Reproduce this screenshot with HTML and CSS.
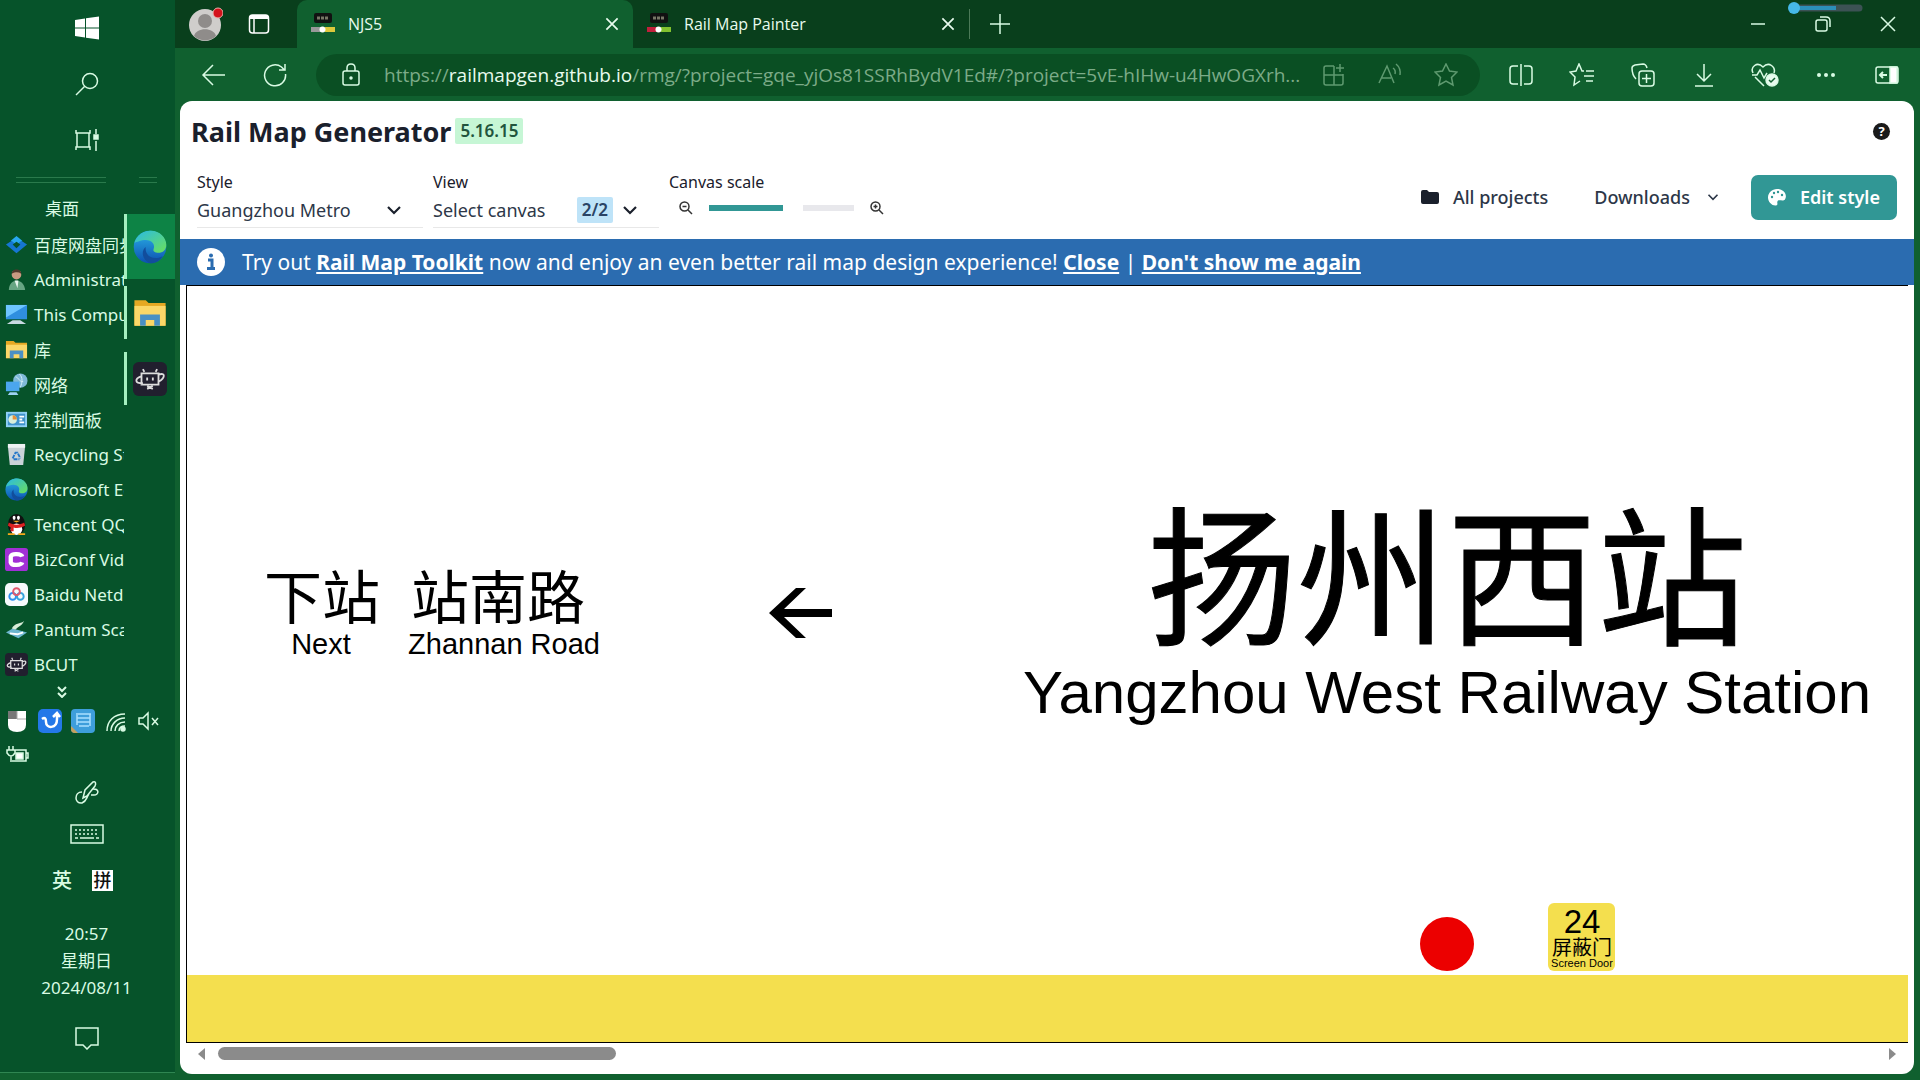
FILE: index.html
```html
<!DOCTYPE html>
<html lang="en">
<head>
<meta charset="UTF-8">
<meta name="viewport" content="width=device-width, initial-scale=1.0">
<title>NJS5 - Rail Map Generator</title>
<link rel="stylesheet" href="styles.css">
</head>
<body>

<!-- shared icons -->
<svg class="defs" width="0" height="0">
    <defs>
        <linearGradient id="edgeBlue" x1="0" y1="0" x2="0" y2="1">
            <stop offset="0" stop-color="#2bb3e8"/>
            <stop offset="1" stop-color="#0c50b0"/>
        </linearGradient>
        <linearGradient id="edgeGreen" x1="0" y1="0" x2="1" y2="1">
            <stop offset="0" stop-color="#29b9e6"/>
            <stop offset="1" stop-color="#6be05a"/>
        </linearGradient>
    </defs>
    <symbol id="edge" viewBox="0 0 24 24">
        <circle cx="12" cy="12" r="11.500" fill="url(#edgeBlue)"/>
        <path d="M1 9C3 3 8 .5 12.500.5 19 .5 23.500 5.500 23.500 10.500c0 3.500-2.500 5.500-5.500 5.500-2.500 0-4-1-3.500-2.500C16 10 13 7 9 7 5.500 7 2.500 8.500 1 9z" fill="url(#edgeGreen)"/>
        <path d="M9 12c-1 6 5 10 12 6.500-2 3-5 5-8.500 5C7 22 5 15 9 12z" fill="#124d9c"/>
    </symbol>
    <symbol id="folder" viewBox="0 0 24 24">
        <path d="M1 3h8l2 2h12v16H1z" fill="#e5a823"/>
        <path d="M1 7h22v14H1z" fill="#fbd768"/>
        <path d="M5 21v-8h14v8h-4v-4H9v4z" fill="#4a90c4"/>
    </symbol>
    <symbol id="bcut" viewBox="0 0 24 24">
        <rect width="24" height="24" rx="4" fill="#211f2e"/>
        <path d="M8 7l-1-2M16 7l1-2M6 8h12v8H6zM10 11v2M14 11v2M6 10c-5 2-5 5 1 5M18 9c5-2 5 2 0 5M10 19l4-2M10 17l4 2" fill="none" stroke="#ddd" stroke-width="1.300"/>
    </symbol>
    <symbol id="close" viewBox="0 0 16 16">
        <path d="M3 3l10 10M13 3L3 13" fill="none" stroke="currentColor" stroke-width="1.500"/>
    </symbol>
    <symbol id="chevron" viewBox="0 0 16 16">
        <path d="M2 5l6 6 6-6" fill="none" stroke="currentColor" stroke-width="2.200"/>
    </symbol>
</svg>

<div class="desktop">
    <aside class="taskbar">
        <button class="task-btn" aria-label="Start">
            <svg width="24" height="24" viewBox="0 0 24 24" fill="#fff"><path d="M0 4l10-1.500v9H0zM11 2.300L24 .5v11H11zM0 12.500h10v9L0 20zM11 12.500h13v11l-13-1.800z"/></svg>
        </button>
        <button class="task-btn" aria-label="Search">
            <svg class="line" width="24" height="24" viewBox="0 0 24 24"><circle cx="15" cy="9" r="7.500"/><path d="M9.500 14.500L1 23"/></svg>
        </button>
        <button class="task-btn" aria-label="Task view">
            <svg class="line" width="24" height="24" viewBox="0 0 24 24"><path d="M1 2v3h14V2M1 22v-3h14v3M2 5v14M14 5v14M21 1v5M21 13v10"/><path d="M19 7h4v4h-4z" fill="#d9fbe4"/></svg>
        </button>
        <div class="grips"><span class="grip long"></span><span class="grip"></span></div>
        <div class="middle">
            <nav class="shortcuts">
                <h2>桌面</h2>
                <a href="#"><svg viewBox="0 0 24 24"><path d="M12 3l6 5-6 5-6-5z" fill="#28a8f0"/><path d="M1 12l6-4 5 5 5-5 6 4-11 9z" fill="#1676d2"/><path d="M8 12l4-3 4 3-4 4z" fill="#06532a"/></svg>百度网盘同步</a>
                <a href="#"><svg viewBox="0 0 24 24"><circle cx="12" cy="7" r="5" fill="#c99a82"/><path d="M7 6c0-6 10-6 10 0-3-2-6-2-10 0z" fill="#50382c"/><path d="M4 23c0-13 16-13 17 0z" fill="#67a583"/><path d="M10 13l3 8 1-8z" fill="#e8f5ee"/></svg>Administrator</a>
                <a href="#"><svg viewBox="0 0 24 24"><path d="M1 2h22v15H1z" fill="#2f8fe0"/><path d="M1 2h22L1 15z" fill="#6ec5ff"/><path d="M8 18h8l6 4H2z" fill="#c9d9e2"/></svg>This Computer</a>
                <a href="#"><svg><use href="#folder"/></svg>库</a>
                <a href="#"><svg viewBox="0 0 24 24"><circle cx="16" cy="8" r="7.500" fill="#7fb9d8"/><path d="M11 4c4 1 3 5 8 5M15 1c4 4 3 9 1 14" stroke="#d4edf8" fill="none"/><path d="M1 9h14v10H1z" fill="#4ba6ee"/><path d="M5 20h7l2 3H3z" fill="#9fd2f5"/></svg>网络</a>
                <a href="#"><svg viewBox="0 0 24 24"><path d="M1 4h22v16H1z" fill="#8fd0f5"/><path d="M3 6h18v12H3z" fill="#3f93cc"/><circle cx="8" cy="12" r="4.500" fill="#d9efda"/><path d="M8 12V7.500a4.500 4.500 0 0 1 4.500 4.500z" fill="#e58f3a"/><path d="M15 9h5M15 12h3M15 15h5" stroke="#fff" stroke-width="2"/></svg>控制面板</a>
                <a href="#"><svg viewBox="0 0 24 24"><path d="M3 3h18l-2 20H5z" fill="#cbd3d8"/><path d="M3 1h18v4H3z" fill="#eef2f4"/><path d="M8 16l3-6h2l3 6M9 17h6" stroke="#2677c9" stroke-width="2" stroke-dasharray="4 1" fill="none"/></svg>Recycling Station</a>
                <a href="#"><svg><use href="#edge"/></svg>Microsoft Edge</a>
                <a href="#"><svg viewBox="0 0 24 24"><ellipse cx="12" cy="12" rx="9" ry="11" fill="#111"/><ellipse cx="12" cy="17" rx="6" ry="6" fill="#fff"/><ellipse cx="9.500" cy="5" rx="1.500" ry="2.200" fill="#fff"/><ellipse cx="14" cy="5" rx="1.500" ry="2.200" fill="#fff"/><path d="M8 8h8l-4 2z" fill="#f7a81b"/><path d="M4 10c5 3 11 3 16 0l1 3c-5 3-9 3-12 2v4H6v-4l-3-2z" fill="#dc2222"/><path d="M3 22h7M14 22h7" stroke="#f7a81b" stroke-width="2"/></svg>Tencent QQ</a>
                <a href="#"><svg viewBox="0 0 24 24"><rect width="24" height="24" rx="3" fill="#a12fd6"/><path d="M18 9c-1-3-11-4-12 0v6c1 4 11 3 12 0" fill="none" stroke="#fff" stroke-width="4.500"/></svg>BizConf Video</a>
                <a href="#"><svg viewBox="0 0 24 24"><rect width="24" height="24" rx="5" fill="#f6fafc"/><g fill="none" stroke-width="2"><circle cx="8" cy="14" r="3.500" stroke="#2f8ff0"/><circle cx="16" cy="14" r="3.500" stroke="#35a3dc"/><circle cx="12" cy="9" r="3.500" stroke="#e2586c"/></g></svg>Baidu Netdisk</a>
                <a href="#"><svg viewBox="0 0 24 24"><path d="M1 15l7-4 15 4-9 6z" fill="#6db6cf"/><path d="M5 16l8 1 6-2" fill="none" stroke="#fff" stroke-width="2"/><path d="M7 11c4-7 8-4 13-8-3 6-6 5-9 9z" fill="#d8ecd8"/></svg>Pantum Scanner</a>
                <a href="#"><svg><use href="#bcut"/></svg>BCUT</a>
                <button class="more" aria-label="More shortcuts"><svg width="10" height="12" viewBox="0 0 10 12"><path d="M1 1l4 4 4-4M1 7l4 4 4-4" fill="none" stroke="#d9fbe4" stroke-width="2"/></svg></button>
            </nav>
            <div class="running">
                <button class="app active" aria-label="Microsoft Edge"><svg width="34" height="34"><use href="#edge"/></svg></button>
                <button class="app" aria-label="File Explorer"><svg width="34" height="34"><use href="#folder"/></svg></button>
                <button class="app" aria-label="BCUT"><svg width="34" height="34"><use href="#bcut"/></svg></button>
            </div>
        </div>
        <div class="tray">
            <svg width="24" height="24" viewBox="0 0 24 24"><path d="M3 2h18v14q0 7-9 7t-9-7z" fill="#fff"/><path d="M3 2h9v8H3z" fill="#777"/><path d="M12 2v8h9" fill="none" stroke="#aaa"/></svg>
            <svg width="24" height="24" viewBox="0 0 24 24"><rect width="24" height="24" rx="5" fill="#2478e8"/><path d="M4 10q4-3 4 3c0 7 11 7 11-3V5M15 8l4-4 3 4" fill="none" stroke="#fff" stroke-width="2.500"/></svg>
            <svg width="24" height="24" viewBox="0 0 24 24"><rect width="24" height="24" rx="4" fill="#3e9edb"/><path d="M0 17l7 7H4q-4 0-4-4z" fill="#c5a15c"/><path d="M7 5h13M6 9h13M6 13h13M8 17h10M6 4v12M19 5v12" stroke="#a9e0ff" stroke-width="1.500" fill="none"/></svg>
            <svg class="line" width="24" height="24" viewBox="0 0 24 24"><path d="M3 22C3 12 10 5 21 5M7 22C7 15 13 9 21 9M11 22c0-5 4-9 10-9M15 22c0-3 2-5 6-5"/><circle cx="19" cy="20" r="2" fill="#d9fbe4"/></svg>
            <svg class="line" width="24" height="24" viewBox="0 0 24 24"><path d="M2 9h4l5-5v16l-5-5H2zM15 9l6 7M21 9l-6 7"/></svg>
            <svg class="line" width="24" height="24" viewBox="0 0 24 24"><path d="M8 7h13v11H7M21 10h2v5h-2M4 3v4M8 3v4M2 7h8v3q-2 3-4 3t-4-3zM6 13v6"/><path d="M11 10h7v6h-7z" fill="#fff"/></svg>
        </div>
        <button class="task-small" aria-label="Pen"><svg class="line" width="26" height="26" viewBox="0 0 26 26"><path d="M8 12c-8 0-8 12 0 11 5-2 4-5 7-9M9 18l2-8 8-8c3-1 3 2 2 4l-8 10zM18 9c8-1 7 6 2 6h-3"/></svg></button>
        <button class="task-small" aria-label="Keyboard"><svg class="line" width="34" height="20" viewBox="0 0 34 20"><rect x="1" y="1" width="32" height="18"/><path d="M5 6h24M5 10h24" stroke-dasharray="2 2"/><path d="M5 14h3M10 14h14M26 14h3"/></svg></button>
        <div class="ime"><span>英</span><span class="pin">拼</span></div>
        <div class="clock">20:57<br>星期日<br>2024/08/11</div>
        <button class="task-small" aria-label="Notifications"><svg class="line" width="24" height="24" viewBox="0 0 24 24"><path d="M1 2h22v17h-7l-4 4-4-4H1z"/></svg></button>
    </aside>

    <section class="browser">
        <header class="tabs">
            <div class="profile">
                <button class="avatar" aria-label="Profile">
                    <svg width="34" height="34" viewBox="0 0 34 34"><circle cx="16" cy="18" r="16" fill="#cfcdcb"/><circle cx="16" cy="14" r="7" fill="#8f8c8a"/><path d="M5 29c2-9 20-9 22 0a16 16 0 0 1-22 0z" fill="#8f8c8a"/><circle cx="29" cy="6" r="5" fill="#d3121b" stroke="#e9b0aa"/></svg>
                </button>
                <button aria-label="Tab actions"><svg width="22" height="22" viewBox="0 0 22 22" fill="none" stroke="#fff" stroke-width="1.500"><rect x="1.500" y="2" width="19" height="18" rx="3"/><path d="M2 4h18" stroke-width="4"/><path d="M6 6v14"/></svg></button>
            </div>
            <div class="tab current">
                <svg width="24" height="22" viewBox="0 0 24 22"><rect x="3" width="18" height="10" rx="2" fill="#111"/><path d="M6 5h12" stroke="#776" stroke-width="3" stroke-dasharray="3 1"/><path d="M0 14h10v5H0z" fill="#999"/><path d="M14 14h10v5H14z" fill="#dcc83c"/><circle cx="11.500" cy="16.500" r="3" fill="#fff"/></svg>
                <span>NJS5</span>
                <button aria-label="Close tab"><svg width="18" height="18"><use href="#close"/></svg></button>
            </div>
            <div class="tab">
                <svg width="24" height="22" viewBox="0 0 24 22"><rect x="3" width="18" height="10" rx="2" fill="#111"/><path d="M6 5h12" stroke="#776" stroke-width="3" stroke-dasharray="3 1"/><path d="M0 14h10v5H0z" fill="#c0203c"/><path d="M14 14h10v5H14z" fill="#82c12f"/><circle cx="11.500" cy="16.500" r="3" fill="#fff"/></svg>
                <span>Rail Map Painter</span>
                <button aria-label="Close tab"><svg width="18" height="18"><use href="#close"/></svg></button>
            </div>
            <button class="new-tab" aria-label="New tab"><svg class="line" width="20" height="20" viewBox="0 0 20 20"><path d="M10 0v20M0 10h20"/></svg></button>
            <div class="window-buttons">
                <button aria-label="Minimize"><svg class="line" width="16" height="16" viewBox="0 0 16 16"><path d="M1 8h14"/></svg></button>
                <button aria-label="Restore"><svg class="line" width="16" height="16" viewBox="0 0 16 16"><rect x="1" y="4" width="11" height="11" rx="2"/><path d="M5 1h6q4 0 4 4v6"/></svg></button>
                <button aria-label="Close"><svg class="line" width="16" height="16" viewBox="0 0 16 16"><path d="M1 1l14 14M15 1L1 15"/></svg></button>
                <svg class="volume" width="76" height="14" viewBox="0 0 76 14"><path d="M8 8h64" stroke="#3c5254" stroke-width="7" stroke-linecap="round"/><path d="M8 8h41" stroke="#2b8fb8" stroke-width="4"/><circle cx="7" cy="8" r="6" fill="#46b8e8"/></svg>
            </div>
        </header>

        <div class="toolbar">
            <button class="nav" aria-label="Back"><svg class="line" width="24" height="24" viewBox="0 0 24 24"><path d="M24 12H2M12 2L2 12l10 10"/></svg></button>
            <button class="nav" aria-label="Refresh"><svg class="line" width="24" height="24" viewBox="0 0 24 24"><path d="M22.500 11a10.500 10.500 0 1 1-4-7l3 3M22 1v6h-6"/></svg></button>
            <div class="address">
                <svg class="line" width="20" height="24" viewBox="0 0 20 24"><rect x="2" y="8" width="16" height="14" rx="2"/><path d="M6 8V5q0-4 4-4t4 4v3"/><circle cx="10" cy="15" r="1" fill="#d9fbe4"/></svg>
                <a class="url" href="#">https://<b>railmapgen.github.io</b>/rmg/?project=gqe_yjOs81SSRhBydV1Ed#/?project=5vE-hIHw-u4HwOGXrh...</a>
                <button aria-label="Install app"><svg width="24" height="24" viewBox="0 0 24 24"><path d="M12 3H4q-2 0-2 2v15q0 2 2 2h15q2 0 2-2v-9M2 12h19M12 3v19M18 1v8M14 5h8"/></svg></button>
                <button aria-label="Read aloud"><svg width="24" height="24" viewBox="0 0 24 24"><path d="M1 20L9 3l7 17M4 15h9M15 5q3 2 2 6M18 1q5 4 4 11"/></svg></button>
                <button aria-label="Favorite"><svg width="24" height="24" viewBox="0 0 24 24"><path d="M12 1l3.500 7 7.500 1-5.500 5.500L19 22l-7-4-7 4 1.500-7.500L1 9l7.500-1z"/></svg></button>
            </div>
            <div class="extras">
                <button aria-label="Split screen"><svg class="line" width="24" height="24" viewBox="0 0 24 24"><path d="M9 3H4Q1 3 1 6v12q0 3 3 3h5M15 3h5q3 0 3 3v12q0 3-3 3h-5M12 1v22"/></svg></button>
                <button aria-label="Favorites"><svg class="line" width="26" height="24" viewBox="0 0 26 24"><path d="M15 8l-2 0L10 1 7 8l-6 1 5 5-1 8 6-4M17 8h8M15 13h10M17 18h7"/></svg></button>
                <button aria-label="Collections"><svg class="line" width="24" height="24" viewBox="0 0 24 24"><rect x="8" y="8" width="15" height="15" rx="3"/><path d="M15.500 11v9M11 15.500h9M5 16C1 12 1 7 1 5q0-2 3-3l8-1q3 0 4 4"/></svg></button>
                <button aria-label="Downloads"><svg class="line" width="20" height="24" viewBox="0 0 20 24"><path d="M10 1v17M3 11l7 7 7-7M1 23h18"/></svg></button>
                <button aria-label="Browser essentials"><svg class="line" width="28" height="24" viewBox="0 0 28 24"><path d="M2 10C-1 4 6-2 12 4c6-6 13 0 11 6M1 12h5l3-5 4 8 3-5M4 14l9 9"/><circle cx="21" cy="17" r="6" fill="#e8fbee"/><path d="M18 17l2 2 4-4" stroke="#10602f"/></svg></button>
                <button aria-label="More"><svg width="20" height="6" viewBox="0 0 20 6" fill="#d9fbe4"><circle cx="3" cy="3" r="2"/><circle cx="10" cy="3" r="2"/><circle cx="17" cy="3" r="2"/></svg></button>
                <button aria-label="Sidebar"><svg class="line" width="24" height="20" viewBox="0 0 24 20"><rect x="1" y="2" width="22" height="16" rx="2"/><path d="M15 2h7v16h-7z" fill="#fff"/><path d="M12 10H5M8 7l-3 3 3 3" stroke-width="2"/></svg></button>
            </div>
        </div>

        <main class="page">
            <div class="title-row">
                <h1>Rail Map Generator</h1>
                <span class="badge version">5.16.15</span>
                <button class="help" aria-label="Help">?</button>
            </div>

            <div class="controls">
                <div class="field">
                    <label for="style">Style</label>
                    <div class="select-box">
                        <select id="style"><option>Guangzhou Metro</option></select>
                        <svg width="16" height="16"><use href="#chevron"/></svg>
                    </div>
                </div>
                <div class="field">
                    <label for="view">View</label>
                    <div class="select-box">
                        <select id="view"><option>Select canvas</option></select>
                        <span class="badge count">2/2</span>
                        <svg width="16" height="16"><use href="#chevron"/></svg>
                    </div>
                </div>
                <div class="field scale">
                    <label for="scale">Canvas scale</label>
                    <div class="slider-box">
                        <svg width="14" height="14" viewBox="0 0 14 14" fill="none" stroke="#333" stroke-width="1.500"><circle cx="5.500" cy="5.500" r="4.500"/><path d="M9 9l4 4M3.500 5.500h4"/></svg>
                        <input type="range" id="scale" min="0" max="100" value="59">
                        <svg width="14" height="14" viewBox="0 0 14 14" fill="none" stroke="#333" stroke-width="1.500"><circle cx="5.500" cy="5.500" r="4.500"/><path d="M9 9l4 4M3.500 5.500h4M5.500 3.500v4"/></svg>
                    </div>
                </div>
                <div class="actions">
                    <button class="ghost"><svg width="18" height="16" viewBox="0 0 18 16" fill="#1a202c"><path d="M0 3q0-2 2-2h4l2 2h8q2 0 2 2v8q0 2-2 2H2q-2 0-2-2z"/></svg>All projects</button>
                    <button class="ghost downloads">Downloads<svg width="12" height="12"><use href="#chevron"/></svg></button>
                    <button class="primary"><svg width="18" height="18" viewBox="0 0 18 18"><path d="M9 1C4 1 0 5 0 9.500 0 14 4 18 8 17.500c3-1 0-3 2-5 2-1 5 1 7-1C20 6 15 1 9 1z" fill="#fff"/><g fill="#319795"><circle cx="4" cy="9" r="1.200"/><circle cx="6" cy="5" r="1.200"/><circle cx="10" cy="4" r="1.200"/><circle cx="14" cy="7" r="1.200"/></g></svg>Edit style</button>
                </div>
            </div>

            <div class="banner">
                <svg width="28" height="28" viewBox="0 0 28 28"><circle cx="14" cy="14" r="14" fill="#fff"/><path d="M11 12h4v8M10 20.500h8" fill="none" stroke="#2b6cb0" stroke-width="3"/><circle cx="14" cy="7.500" r="2" fill="#2b6cb0"/></svg>
                <p>Try out <a href="#">Rail Map Toolkit</a> now and enjoy an even better rail map design experience! <a href="#">Close</a> | <a href="#">Don't show me again</a></p>
            </div>

            <div class="canvas">
                <svg width="1721" height="756">
                    <g text-anchor="middle">
                        <text class="zh" x="135" y="333" font-size="58">下站</text>
                        <text class="en" x="134" y="368" font-size="29">Next</text>
                        <text class="zh" x="311" y="333" font-size="58">站南路</text>
                        <text class="en" x="317" y="368" font-size="29">Zhannan Road</text>
                        <text class="zh name" x="1260" y="348" font-size="150">扬州西站</text>
                        <text class="en" x="1260" y="427" font-size="60">Yangzhou West Railway Station</text>
                    </g>
                    <path d="M582 327L609 302h10l-22 21h48v8h-48l22 21h-10z"/>
                    <rect y="689" width="100%" height="67" fill="#f4df4e"/>
                    <circle cx="1260" cy="658" r="27" fill="#ec0000"/>
                    <rect x="1361" y="617" width="67" height="68" rx="6" fill="#f4df4e"/>
                    <g text-anchor="middle">
                        <text class="en" x="1395" y="647" font-size="33">24</text>
                        <text class="zh" x="1395" y="669" font-size="20">屏蔽门</text>
                        <text class="en" x="1395" y="681" font-size="11">Screen Door</text>
                    </g>
                </svg>
            </div>
            <div class="scrollbar">
                <span class="arrow left"></span>
                <div class="track"><div class="thumb"></div></div>
                <span class="arrow right"></span>
            </div>
        </main>
    </section>
</div>

</body>
</html>
```
FILE: styles.css
```css
* {
    box-sizing: border-box;
}
body {
    margin: 0;
    font-family: "Noto Sans", "Noto Sans CJK SC", sans-serif;
    color: #1a202c;
}
button {
    padding: 0;
    border: 0;
    background: none;
    color: inherit;
    font: inherit;
    cursor: pointer;
}
svg {
    display: block;
    flex: none;
}
.defs {
    position: absolute;
}
.line {
    fill: none;
    stroke: #d9fbe4;
    stroke-width: 1.5;
}
.desktop {
    display: flex;
    height: 100vh;
    overflow: hidden;
    background: #10602f;
}

/* taskbar */
.taskbar {
    display: flex;
    flex-direction: column;
    width: 175px;
    flex: none;
    margin-bottom: 7px;
    padding-right: 2px;
    border-bottom: 1px solid #2f8652;
    background: #06532a;
    color: #d9fbe4;
}
.task-btn {
    display: flex;
    justify-content: center;
    align-items: center;
    height: 56px;
}
.grips {
    display: flex;
    gap: 33px;
    height: 22px;
    padding: 9px 16px 0;
}
.grip {
    width: 18px;
    height: 6px;
    border: solid #2a7a4c;
    border-width: 1px 0;
}
.grip.long {
    width: 91px;
}
.middle {
    display: flex;
    height: 514px;
}
.shortcuts {
    width: 124px;
    overflow: hidden;
}
.shortcuts h2 {
    margin: 0;
    height: 37px;
    line-height: 37px;
    font-size: 17px;
    font-weight: 400;
    text-align: center;
}
.shortcuts a {
    display: flex;
    align-items: center;
    gap: 6px;
    height: 35px;
    padding-left: 5px;
    color: #d9fbe4;
    font-size: 17px;
    white-space: nowrap;
    text-decoration: none;
}
.shortcuts a svg {
    width: 23px;
    height: 23px;
}
.more {
    display: block;
    margin: 4px auto 0;
}
.running {
    flex: 1;
    display: flex;
    flex-direction: column;
    gap: 13px;
    padding-top: 30px;
}
.app {
    display: flex;
    justify-content: center;
    align-items: center;
    height: 53px;
    border-left: 3px solid #a5efc0;
}
.app.active {
    height: 65px;
    margin: -6px -2px -6px 0;
    padding-right: 2px;
    background: #0d8345;
}
.tray {
    display: grid;
    grid-template-columns: repeat(5, 33px);
    justify-items: center;
    align-items: center;
    grid-auto-rows: 34px;
}
.task-small {
    display: flex;
    justify-content: center;
    align-items: center;
    height: 40px;
    margin-top: 1px;
}
.ime {
    display: flex;
    justify-content: center;
    gap: 20px;
    height: 58px;
    padding: 16px 8px 0 0;
    font-size: 20px;
    line-height: 22px;
    font-weight: 500;
}
.ime .pin {
    width: 21px;
    height: 21px;
    font-size: 18px;
    line-height: 20px;
    text-align: center;
    background: #fff;
    color: #111;
}
.clock {
    padding: 8px 0;
    margin-bottom: 8px;
    font-size: 17px;
    line-height: 27px;
    text-align: center;
}

/* browser frame */
.browser {
    flex: 1;
    min-width: 0;
    display: flex;
    flex-direction: column;
}
.tabs {
    display: flex;
    height: 48px;
    background: #093f1c;
    color: #e8fbee;
    font-family: "Open Sans", sans-serif;
    font-size: 16px;
}
.profile {
    display: flex;
    align-items: center;
    gap: 25px;
    width: 122px;
    padding-left: 14px;
}
.tab {
    display: flex;
    align-items: center;
    gap: 13px;
    width: 336px;
    padding: 0 12px 0 14px;
}
.tab.current {
    border-radius: 10px 10px 0 0;
    background: #10602f;
}
.tab span {
    flex: 1;
}
.new-tab {
    display: flex;
    align-items: center;
    height: 30px;
    margin: 9px 0;
    padding-left: 20px;
    border-left: 1px solid #4c7a58;
}
.window-buttons {
    display: flex;
    align-items: center;
    margin-left: auto;
    position: relative;
}
.window-buttons button {
    display: flex;
    justify-content: center;
    width: 65px;
}
.volume {
    position: absolute;
    top: 0;
    left: 62px;
}
.toolbar {
    display: flex;
    align-items: center;
    height: 53px;
}
.nav {
    display: flex;
    justify-content: center;
    width: 62px;
    margin-left: 7px;
}
.nav + .nav {
    margin-left: 0;
}
.address {
    flex: 1;
    min-width: 0;
    display: flex;
    align-items: center;
    gap: 32px;
    height: 42px;
    margin: 0 10px;
    padding: 0 22px 0 25px;
    border-radius: 21px;
    background: #0a4f23;
}
.address button svg {
    fill: none;
    stroke: #5f9a70;
    stroke-width: 1.5;
}
.url {
    flex: 1;
    min-width: 0;
    margin: 0 -20px 0 -9px;
    overflow: hidden;
    color: #7cab88;
    font-family: "Open Sans", sans-serif;
    font-size: 19px;
    text-decoration: none;
    white-space: nowrap;
}
.url b {
    color: #e8fbee;
    font-weight: 400;
}
.extras {
    display: flex;
    padding-right: 3px;
}
.extras button {
    display: flex;
    justify-content: center;
    align-items: center;
    width: 61px;
}

/* app */
.page {
    flex: 1;
    min-height: 0;
    display: flex;
    flex-direction: column;
    margin: 0 6px 6px 5px;
    border-radius: 12px;
    overflow: hidden;
    background: #fff;
}
.title-row {
    display: flex;
    align-items: center;
    height: 60px;
    padding: 0 24px 0 11px;
}
h1 {
    margin: 0 4px 0 0;
    font-size: 27px;
    font-weight: 700;
}
.badge {
    padding: 0 5px;
    border-radius: 2px;
    font-size: 17px;
    line-height: 26px;
    font-weight: 600;
}
.version {
    background: #c6f6d5;
    color: #22543d;
}
.help {
    width: 17px;
    height: 17px;
    margin-left: auto;
    border-radius: 50%;
    background: #1a1a1a;
    color: #fff;
    font-size: 13px;
    line-height: 17px;
    font-weight: 700;
}
.controls {
    display: flex;
    height: 78px;
    padding: 10px 17px 0;
}
.field {
    width: 226px;
    margin-right: 10px;
}
.field label {
    display: block;
    font-size: 16px;
    line-height: 22px;
}
.select-box {
    display: flex;
    align-items: center;
    position: relative;
    height: 35px;
    border-bottom: 1px solid #e8e8e8;
}
.select-box select {
    width: 100%;
    height: 100%;
    padding: 0;
    border: 0;
    appearance: none;
    background: none;
    color: #2d3748;
    font: inherit;
    font-size: 18px;
}
.select-box svg {
    position: absolute;
    right: 21px;
}
.count {
    position: absolute;
    right: 46px;
    background: #bee3f8;
    color: #2a4365;
}
.slider-box {
    display: flex;
    align-items: center;
    gap: 16px;
    height: 29px;
    padding-left: 10px;
}
input[type="range"] {
    width: 145px;
    height: 20px;
    margin: 0;
    appearance: none;
    background: linear-gradient(to right, #319795 58%, #e8e8ec 58%) center / 100% 6px no-repeat;
}
input[type="range"]::-webkit-slider-thumb {
    appearance: none;
    width: 20px;
    height: 20px;
    border-radius: 6px;
    background: #fff;
}
.actions {
    display: flex;
    align-items: center;
    height: 56px;
    margin: -2px 0 0 auto;
    font-size: 18px;
    font-weight: 500;
}
.actions button {
    display: flex;
    align-items: center;
    gap: 14px;
}
.ghost {
    margin-right: 46px;
    color: #2d3748;
}
.actions .downloads {
    gap: 17px;
    margin-right: 32px;
}
.primary {
    height: 45px;
    padding: 0 17px;
    border-radius: 7px;
    background: #319795;
    color: #fff;
    font-weight: 600;
}
.banner {
    display: flex;
    align-items: center;
    gap: 17px;
    height: 46px;
    padding: 0 17px;
    background: #2b6cb0;
    color: #fff;
    font-size: 21px;
}
.banner p {
    margin: 0;
}
.banner a {
    color: #fff;
    font-weight: 700;
}
.canvas {
    flex: 1;
    min-height: 0;
    margin: 0 6px;
    overflow: hidden;
    border: solid #000;
    border-width: 1px 0 1px 1px;
}
.zh {
    font-family: "Noto Sans CJK SC", sans-serif;
}
.zh.name {
    stroke: #000;
    stroke-width: 1px;
}
.en {
    font-family: "Liberation Sans", Arial, sans-serif;
}
.scrollbar {
    display: flex;
    align-items: center;
    justify-content: space-between;
    gap: 13px;
    height: 21px;
    margin: 0 18px 10px;
}
.track {
    flex: 1;
}
.thumb {
    width: 24%;
    height: 13px;
    border-radius: 7px;
    background: #8b8b8b;
}
.arrow {
    border: 6px solid transparent;
}
.left {
    border-left: 0;
    border-right: 7px solid #8b8b8b;
}
.right {
    border-right: 0;
    border-left: 7px solid #8b8b8b;
}
```
